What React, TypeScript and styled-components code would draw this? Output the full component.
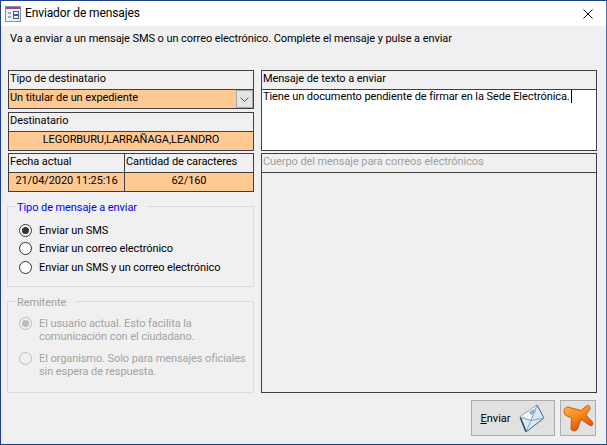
import React from 'react'
import styled, { createGlobalStyle } from 'styled-components'

const GlobalStyle = createGlobalStyle`
  html, body {
    margin: 0;
    padding: 0;
    background: #f0f0f0;
  }
  * {
    box-sizing: border-box;
  }
`

const Window = styled.div`
  width: 607px;
  height: 445px;
  display: flex;
  flex-direction: column;
  border: 1px solid #1a3d8f;
  border-right-color: #5a6d9c;
  background: #f0f0f0;
  color: #000;
  font-family: Roboto, 'Noto Sans', sans-serif;
  font-size: 11px;
  letter-spacing: -0.08px;
  line-height: 13px;
  overflow: hidden;
`

const TitleBar = styled.div`
  height: 25px;
  flex: none;
  display: flex;
  align-items: center;
  padding: 0 13px 0 4px;
  background: #fff;
  font-size: 12px;
  letter-spacing: -0.12px;
  gap: 4px;
`

const TitleText = styled.span`
  flex: 1;
`

const Intro = styled.div`
  height: 44px;
  flex: none;
  padding: 6px 0 0 9px;
`

const Columns = styled.div`
  display: grid;
  grid-template-columns: 246px 336px;
  column-gap: 7px;
  padding: 0 0 0 7px;
  height: 322px;
  flex: none;
`

const LeftColumn = styled.div`
  display: flex;
  flex-direction: column;
`

const RightColumn = styled.div`
  display: flex;
  flex-direction: column;
  gap: 2px;
`

const Field = styled.div<{ $gap?: number; $basis?: number }>`
  display: flex;
  flex-direction: column;
  flex: ${(p) => (p.$basis ? `0 0 ${p.$basis}px` : '1')};
  min-width: 0;
  border: 1px solid #404040;
  margin-bottom: ${(p) => p.$gap ?? 0}px;
`

const FieldLabel = styled.div<{ $disabled?: boolean }>`
  height: 19px;
  flex: none;
  padding: 1px 1px 0;
  border-bottom: 1px solid #404040;
  background: #f0f0f0;
  color: ${(p) => (p.$disabled ? '#a0a0a0' : '#000')};
  white-space: nowrap;
`

const FieldValue = styled.div<{ $center?: boolean }>`
  height: 18px;
  flex: none;
  display: flex;
  align-items: center;
  justify-content: ${(p) => (p.$center ? 'center' : 'flex-start')};
  padding: 0 1px 3px;
  background: #ffc993;
  white-space: nowrap;
`

const ComboArrow = styled.div`
  width: 17px;
  height: 18px;
  margin: 0 -1px -3px auto;
  display: flex;
  align-items: center;
  justify-content: center;
  background: #e4e4e4;
  border: 1px solid #a8a8a8;
`

const FieldRow = styled.div`
  display: flex;
`

const RowField = styled(Field) <{ $width?: number }>`
  flex: ${(p) => (p.$width ? `0 0 ${p.$width}px` : '1')};
  & + & {
    border-left: none;
  }
`

const MessageBox = styled.div`
  flex: 1;
  padding: 0 1px;
  background: #fff;
  white-space: nowrap;
`

const Caret = styled.span`
  display: inline-block;
  width: 1px;
  height: 13px;
  margin-left: 1px;
  vertical-align: -3px;
  background: #000;
`

const EmptyBody = styled.div`
  flex: 1;
  background: #f0f0f0;
`

const GroupBox = styled.div<{ $height: number; $top: number; $inset: number }>`
  position: relative;
  height: ${(p) => p.$height}px;
  width: 247px;
  margin: ${(p) => p.$top}px 0 0 -1px;
  padding-top: ${(p) => p.$inset}px;
  border: 1px solid #dcdcdc;
`

const GroupTitle = styled.div<{ $disabled?: boolean }>`
  position: absolute;
  top: -6px;
  left: 8px;
  padding: 0 9px 0 1px;
  background: #f0f0f0;
  color: ${(p) => (p.$disabled ? '#a0a0a0' : '#0000ff')};
`

const RadioRow = styled.div<{ $disabled?: boolean; $height: number }>`
  display: flex;
  align-items: flex-start;
  height: ${(p) => p.$height}px;
  padding-left: 11px;
  color: ${(p) => (p.$disabled ? '#a3a3a3' : '#000')};
`

const RadioMark = styled.span<{ $checked?: boolean; $disabled?: boolean }>`
  width: 13px;
  height: 13px;
  flex: none;
  margin-right: 7px;
  border-radius: 50%;
  border: 1px solid ${(p) => (p.$disabled ? '#bcbcbc' : '#333')};
  background: ${(p) => (p.$disabled ? '#f0f0f0' : '#fff')};
  display: flex;
  align-items: center;
  justify-content: center;
  &::after {
    content: '';
    display: ${(p) => (p.$checked ? 'block' : 'none')};
    width: 7px;
    height: 7px;
    border-radius: 50%;
    background: ${(p) => (p.$disabled ? '#bcbcbc' : '#333')};
  }
`

const Footer = styled.div`
  display: flex;
  justify-content: flex-end;
  gap: 5px;
  padding: 8px 10px 0 0;
`

const ActionButton = styled.button<{ $width: number }>`
  width: ${(p) => p.$width}px;
  height: 36px;
  display: flex;
  align-items: center;
  justify-content: center;
  gap: 8px;
  padding: 0;
  background: #e1e1e1;
  border: 1px solid #adadad;
  color: #000;
  font: inherit;
`

const Mnemonic = styled.span`
  text-decoration: underline;
`

const FormIcon = () => (
  <svg width="16" height="16" viewBox="0 0 16 16">
    <rect x="0.5" y="0.5" width="15" height="15" fill="#eef1f8" stroke="#7d8db8" />
    <rect x="1" y="1" width="14" height="2" fill="#a4476a" />
    <path d="M3 7h3M3 11h3" stroke="#3f5c9c" />
    <rect x="8.5" y="5.5" width="5" height="3" fill="#fff" stroke="#3f5c9c" />
    <rect x="8.5" y="9.5" width="5" height="3" fill="#fff" stroke="#3f5c9c" />
  </svg>
)

const CloseGlyph = () => (
  <svg width="10" height="10" viewBox="0 0 10 10">
    <path d="M0.5 0.5l9 9M9.5 0.5l-9 9" stroke="#111" fill="none" />
  </svg>
)

const ChevronIcon = () => (
  <svg width="9" height="5" viewBox="0 0 9 5">
    <path d="M0.5 0.5l4 4 4-4" stroke="#555" fill="none" />
  </svg>
)

const EnvelopeIcon = () => (
  <svg width="27" height="30" viewBox="0 0 27 30">
    <path d="M1 14L18 2l7 13L7 29z" fill="#d5e9f6" stroke="#46606f" strokeLinejoin="round" />
    <path d="M1 14l11 3.500L18 2" fill="#eef7fc" stroke="#7f9bae" strokeLinejoin="round" />
    <path d="M7 29l5-11.500L25 15" fill="none" stroke="#8aa7ba" />
    <path d="M1.500 15L7 28.500" fill="none" stroke="#2f4452" strokeWidth="1.4" />
    <path d="M10 9l5-3 2 3-5 3z" fill="#8fb2cb" />
  </svg>
)

const CancelIcon = () => (
  <svg width="31" height="28" viewBox="0 0 31 28">
    <defs>
      <linearGradient id="cancelFill" x1="0" y1="0" x2="0.5" y2="1">
        <stop offset="0" stopColor="#ffb347" />
        <stop offset="0.5" stopColor="#f98a1f" />
        <stop offset="1" stopColor="#d9560a" />
      </linearGradient>
    </defs>
    <path
      d="M1 8C1 4 3 3 5 3L18 6.500L24 1.500C26 .5 27.500 3 27 5L23 11L29.500 18C30.500 20 29.500 22.500 27 21.500L18 15.500L14.500 25C13.500 27.500 8.500 27.500 8 25L8.500 14L3 11.500C2 11 1 10 1 8z"
      fill="url(#cancelFill)"
      stroke="#b34c08"
      strokeWidth="0.8"
    />
  </svg>
)

export default function App() {
  return (
    <>
      <GlobalStyle />
      <Window>
        <TitleBar>
          <FormIcon />
          <TitleText>Enviador de mensajes</TitleText>
          <CloseGlyph />
        </TitleBar>
        <Intro>Va a enviar a un mensaje SMS o un correo electrónico. Complete el mensaje y pulse a enviar</Intro>
        <Columns>
          <LeftColumn>
            <Field $gap={3}>
              <FieldLabel>Tipo de destinatario</FieldLabel>
              <FieldValue>
                Un titular de un expediente
                <ComboArrow>
                  <ChevronIcon />
                </ComboArrow>
              </FieldValue>
            </Field>
            <Field $gap={2}>
              <FieldLabel>Destinatario</FieldLabel>
              <FieldValue $center>LEGORBURU,LARRAÑAGA,LEANDRO</FieldValue>
            </Field>
            <FieldRow>
              <RowField $width={117}>
                <FieldLabel>Fecha actual</FieldLabel>
                <FieldValue $center>21/04/2020 11:25:16</FieldValue>
              </RowField>
              <RowField>
                <FieldLabel>Cantidad de caracteres</FieldLabel>
                <FieldValue $center>62/160</FieldValue>
              </RowField>
            </FieldRow>
            <GroupBox $height={81} $top={14} $inset={17}>
              <GroupTitle>Tipo de mensaje a enviar</GroupTitle>
              <RadioRow $height={18}>
                <RadioMark $checked />
                Enviar un SMS
              </RadioRow>
              <RadioRow $height={19}>
                <RadioMark />
                Enviar un correo electrónico
              </RadioRow>
              <RadioRow $height={18}>
                <RadioMark />
                Enviar un SMS y un correo electrónico
              </RadioRow>
            </GroupBox>
            <GroupBox $height={92} $top={14} $inset={15}>
              <GroupTitle $disabled>Remitente</GroupTitle>
              <RadioRow $disabled $height={35}>
                <RadioMark $checked $disabled />
                <span>
                  El usuario actual. Esto facilita la
                  <br />
                  comunicación con el ciudadano.
                </span>
              </RadioRow>
              <RadioRow $disabled $height={34}>
                <RadioMark $disabled />
                <span>
                  El organismo. Solo para mensajes oficiales
                  <br />
                  sin espera de respuesta.
                </span>
              </RadioRow>
            </GroupBox>
          </LeftColumn>
          <RightColumn>
            <Field $basis={81}>
              <FieldLabel>Mensaje de texto a enviar</FieldLabel>
              <MessageBox>
                Tiene un documento pendiente de firmar en la Sede Electrónica.
                <Caret />
              </MessageBox>
            </Field>
            <Field $basis={240}>
              <FieldLabel $disabled>Cuerpo del mensaje para correos electrónicos</FieldLabel>
              <EmptyBody />
            </Field>
          </RightColumn>
        </Columns>
        <Footer>
          <ActionButton $width={84}>
            <span>
              <Mnemonic>E</Mnemonic>nviar
            </span>
            <EnvelopeIcon />
          </ActionButton>
          <ActionButton $width={36}>
            <CancelIcon />
          </ActionButton>
        </Footer>
      </Window>
    </>
  )
}
